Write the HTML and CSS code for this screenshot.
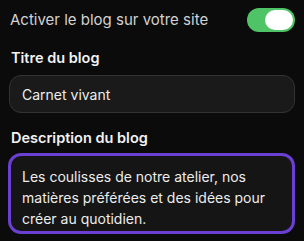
FILE: index.html
```html
<!DOCTYPE html>
<html>
  <head>
    <title>Réglages du blog</title>
    <link rel="stylesheet" href="styles.css">
  </head>
  <body>
    <div class="settings">
      <div class="toggle-row">
        <span class="toggle-label">Activer le blog sur votre site</span>
        <span class="switch"><span class="knob"></span></span>
      </div>

      <label class="field-label" for="title">Titre du blog</label>
      <input id="title" class="text-input" type="text" value="Carnet vivant" />

      <label class="field-label desc-label" for="desc">Description du blog</label>
      <textarea id="desc" class="text-area">Les coulisses de notre atelier, nos matières préférées et des idées pour créer au quotidien.</textarea>
    </div>
  </body>
</html>
```

FILE: styles.css
```css
body {
  margin: 0;
  background: #0b0b0b;
  font-family: Inter, "Noto Sans", sans-serif;
  font-size: 15px;
  color: #ededed;
}

.settings {
  display: flex;
  flex-direction: column;
  padding: 7px 9px 0 8px;
}

.toggle-row {
  display: flex;
  align-items: center;
  justify-content: space-between;
  height: 25px;
  padding-left: 2px;
}

.toggle-label {
  color: #d2d2d2;
}

.switch {
  display: flex;
  justify-content: flex-end;
  align-items: center;
  width: 48px;
  height: 24px;
  border-radius: 12px;
  background: #4fc466;
  padding: 0 2px;
  box-sizing: border-box;
}

.knob {
  width: 28px;
  height: 20px;
  border-radius: 10px;
  background: #ffffff;
}

.field-label {
  font-size: 14.5px;
  font-weight: 600;
  line-height: 20px;
  margin-top: 16px;
  padding-left: 3px;
  color: #f2f2f2;
}

.desc-label {
  margin-top: 15px;
}

.text-input {
  margin-top: 7px;
  height: 38px;
  box-sizing: border-box;
  border: 1px solid #333333;
  border-radius: 12px;
  background: #1a1a1a;
  color: #ededed;
  font-family: inherit;
  font-size: 14px;
  padding: 0 12px;
  margin-left: 1px;
  outline: none;
}

.text-area {
  margin-top: 5px;
  height: 81px;
  box-sizing: border-box;
  border: 3px solid #6b3fd3;
  border-radius: 13px;
  background: #151515;
  color: #ededed;
  font-family: inherit;
  font-size: 14px;
  line-height: 21px;
  padding: 10px 11px 0;
  resize: none;
  overflow: hidden;
  outline: none;
}
```
